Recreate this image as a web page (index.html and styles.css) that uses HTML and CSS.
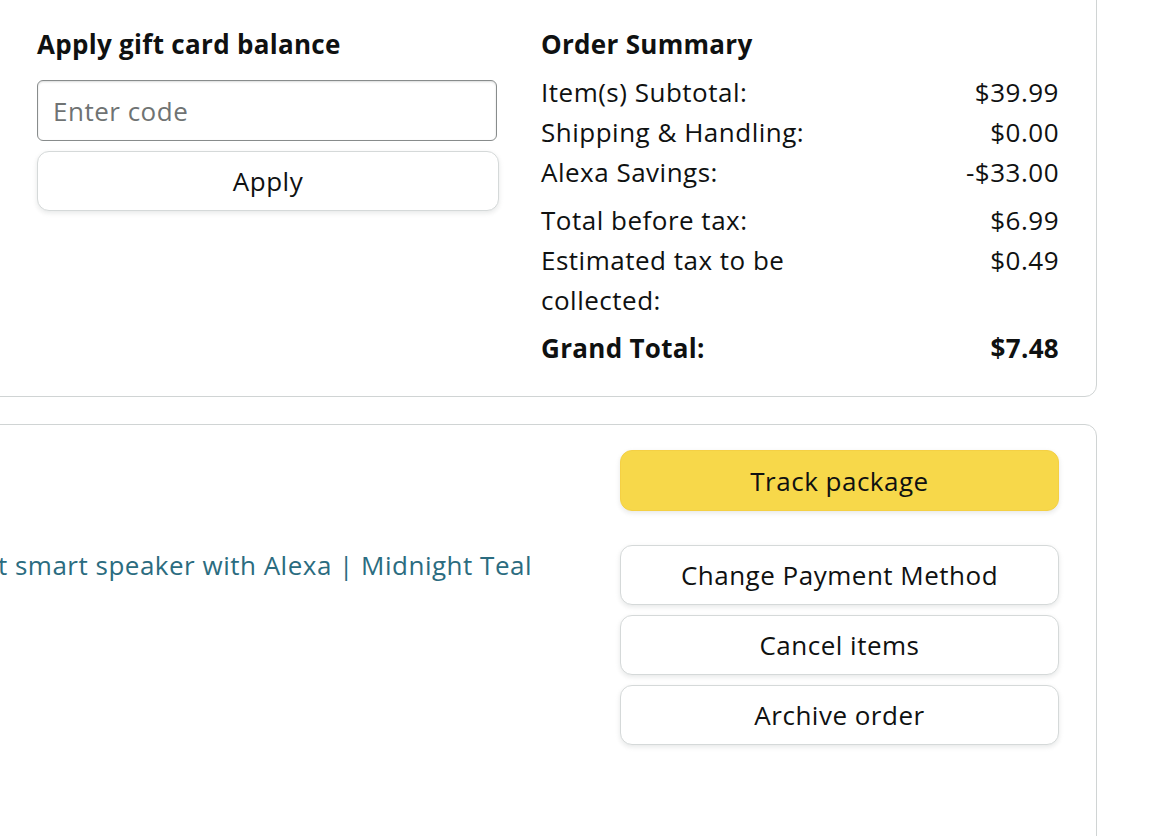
FILE: index.html
```html
<!DOCTYPE html>
<html lang="en">
<head>
<meta charset="utf-8">
<title>Order details</title>
<link rel="stylesheet" href="styles.css">
</head>
<body>
<div class="page">
  <section class="box box-summary">
    <div class="gift">
      <h2 class="heading">Apply gift card balance</h2>
      <input class="code-input" type="text" placeholder="Enter code">
      <button class="btn btn-apply">Apply</button>
    </div>
    <div class="summary">
      <h2 class="heading">Order Summary</h2>
      <div class="group">
        <div class="row"><span>Item(s) Subtotal:</span><span class="amt">$39.99</span></div>
        <div class="row"><span>Shipping &amp; Handling:</span><span class="amt">$0.00</span></div>
        <div class="row"><span>Alexa Savings:</span><span class="amt">-$33.00</span></div>
      </div>
      <div class="group">
        <div class="row"><span>Total before tax:</span><span class="amt">$6.99</span></div>
        <div class="row"><span>Estimated tax to be collected:</span><span class="amt">$0.49</span></div>
      </div>
      <div class="group">
        <div class="row total"><span>Grand Total:</span><span class="amt">$7.48</span></div>
      </div>
    </div>
  </section>

  <section class="box box-shipment">
    <div class="item">
      <a class="item-link" href="#">Echo Pop | Full sound compact smart speaker with Alexa | Midnight Teal</a>
    </div>
    <div class="actions">
      <button class="btn btn-primary">Track package</button>
      <div class="secondary">
        <button class="btn">Change Payment Method</button>
        <button class="btn">Cancel items</button>
        <button class="btn">Archive order</button>
      </div>
    </div>
  </section>
</div>
</body>
</html>
```

FILE: styles.css
```css
* { box-sizing: border-box; }

html, body {
  margin: 0;
  padding: 0;
  background: #ffffff;
  overflow: hidden;
}

body {
  font-family: "Open Sans", Lato, "Liberation Sans", sans-serif;
  font-size: 26px;
  line-height: 40px;
  color: #0f1111;
  letter-spacing: 0.5px;
}

.page {
  width: 1117px;
  margin-left: -20px;
}

.box {
  border: 1px solid #d0d4d4;
  border-radius: 12px;
  background: #fff;
}

.box-summary {
  margin-top: -20px;
  padding: 43px 37px 28px 56px;
  display: grid;
  grid-template-columns: 462px 1fr;
  column-gap: 42px;
}

.heading {
  margin: 0;
  font-size: 26px;
  line-height: 40px;
  font-weight: 700;
  letter-spacing: 0.3px;
}

.gift {
  display: flex;
  flex-direction: column;
}

.code-input {
  margin-top: 16px;
  width: 460px;
  height: 61px;
  border: 1px solid #888c8c;
  border-radius: 6px;
  box-shadow: inset 0 1px 2px rgba(15,17,17,0.15);
  padding: 0 15px;
  font: inherit;
  letter-spacing: inherit;
  color: #0f1111;
  outline: none;
}

.code-input::placeholder {
  color: #6f7373;
}

.btn {
  display: block;
  width: 100%;
  height: 60px;
  border: 1px solid #d5d9d9;
  border-radius: 12px;
  background: #fff;
  box-shadow: 0 2px 5px rgba(213,217,217,0.6);
  font: inherit;
  letter-spacing: inherit;
  color: #0f1111;
  cursor: pointer;
  padding: 0;
}

.btn-apply {
  margin-top: 10px;
  width: 462px;
}

.summary .heading {
  margin-bottom: 8px;
}

.group + .group {
  margin-top: 8px;
}

.row {
  display: grid;
  grid-template-columns: 300px 1fr;
}

.row .amt {
  text-align: right;
}

.row.total {
  font-weight: 700;
  letter-spacing: 0.3px;
}

.box-shipment {
  margin-top: 27px;
  min-height: 440px;
  padding: 25px 37px 40px 56px;
  display: grid;
  grid-template-columns: 1fr 439px;
  column-gap: 88px;
}

.item {
  display: flex;
  justify-content: flex-end;
  padding-top: 95px;
  min-width: 0;
}

.item-link {
  flex: none;
  white-space: nowrap;
  color: #2b6c80;
  text-decoration: none;
}

.actions {
  display: flex;
  flex-direction: column;
}

.btn-primary {
  height: 61px;
  background: #f7d84a;
  border-color: #f4d044;
}

.secondary {
  margin-top: 34px;
  display: flex;
  flex-direction: column;
  gap: 10px;
}
```
